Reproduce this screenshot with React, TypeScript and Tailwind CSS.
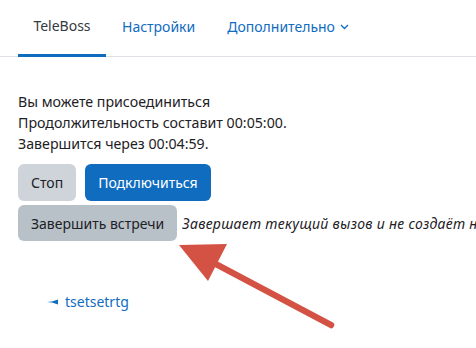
import React from "react";

export default function App() {
  return (
    <div className="relative w-[476px] h-[348px] bg-white overflow-hidden text-[#1d2125]" style={{ fontFamily: '"Noto Sans", "Open Sans", sans-serif' }}>
      <nav className="flex pl-[18px] border-b border-[#dee2e6] h-[57px] items-stretch">
        <div className="w-[88px] flex items-center justify-center border-b-[3px] border-[#0f6cbf] -mb-px text-[14px] text-[#343a40] pb-[4px]">TeleBoss</div>
        <div className="px-[16px] flex items-center text-[14px] text-[#0f6cbf] pb-[4px]">Настройки</div>
        <div className="px-[16px] flex items-center text-[14px] text-[#0f6cbf] pb-[4px] gap-[5px]">
          Дополнительно
          <svg width="9" height="6" viewBox="0 0 9 6" className="mt-[2px]">
            <path d="M1 1 L4.5 4.5 L8 1" fill="none" stroke="#0f6cbf" strokeWidth="1.3" />
          </svg>
        </div>
      </nav>
      <div className="pl-[18px] pt-[34px] text-[14.2px] leading-[21px]">
        <div>Вы можете присоединиться</div>
        <div>Продолжительность составит 00:05:00.</div>
        <div>Завершится через 00:04:59.</div>
        <div className="flex gap-[9px] mt-[10px] text-[14px]">
          <button className="h-[37px] px-[13px] rounded-[6px] bg-[#ced4da]">Стоп</button>
          <button className="h-[37px] px-[13px] rounded-[6px] bg-[#0f6cbf] text-white">Подключиться</button>
        </div>
        <div className="flex items-center mt-[4px] whitespace-nowrap text-[14px]">
          <button className="h-[36px] px-[13px] rounded-[6px] bg-[#b8c0c8] shrink-0">Завершить встречи</button>
          <span className="italic ml-[5px] overflow-hidden tracking-[0.3px]">Завершает текущий вызов и не создаёт н</span>
        </div>
        <div className="mt-[50px] pl-[29px] flex items-center gap-[6px] text-[14px] text-[#0f6cbf]">
          <svg width="12" height="6" viewBox="0 0 12 6">
            <path d="M0 3 L5 2.4 L11 0.5 L11 5.5 L5 3.6 Z" fill="#0f6cbf" />
          </svg>
          tsetsetrtg
        </div>
      </div>
      <svg className="absolute left-0 top-0" width="476" height="348" viewBox="0 0 476 348">
        <line x1="331" y1="325" x2="212" y2="262" stroke="#d35244" strokeWidth="6.5" strokeLinecap="round" />
        <polygon points="179,245 227,244 208,281" fill="#d35244" />
      </svg>
    </div>
  );
}
